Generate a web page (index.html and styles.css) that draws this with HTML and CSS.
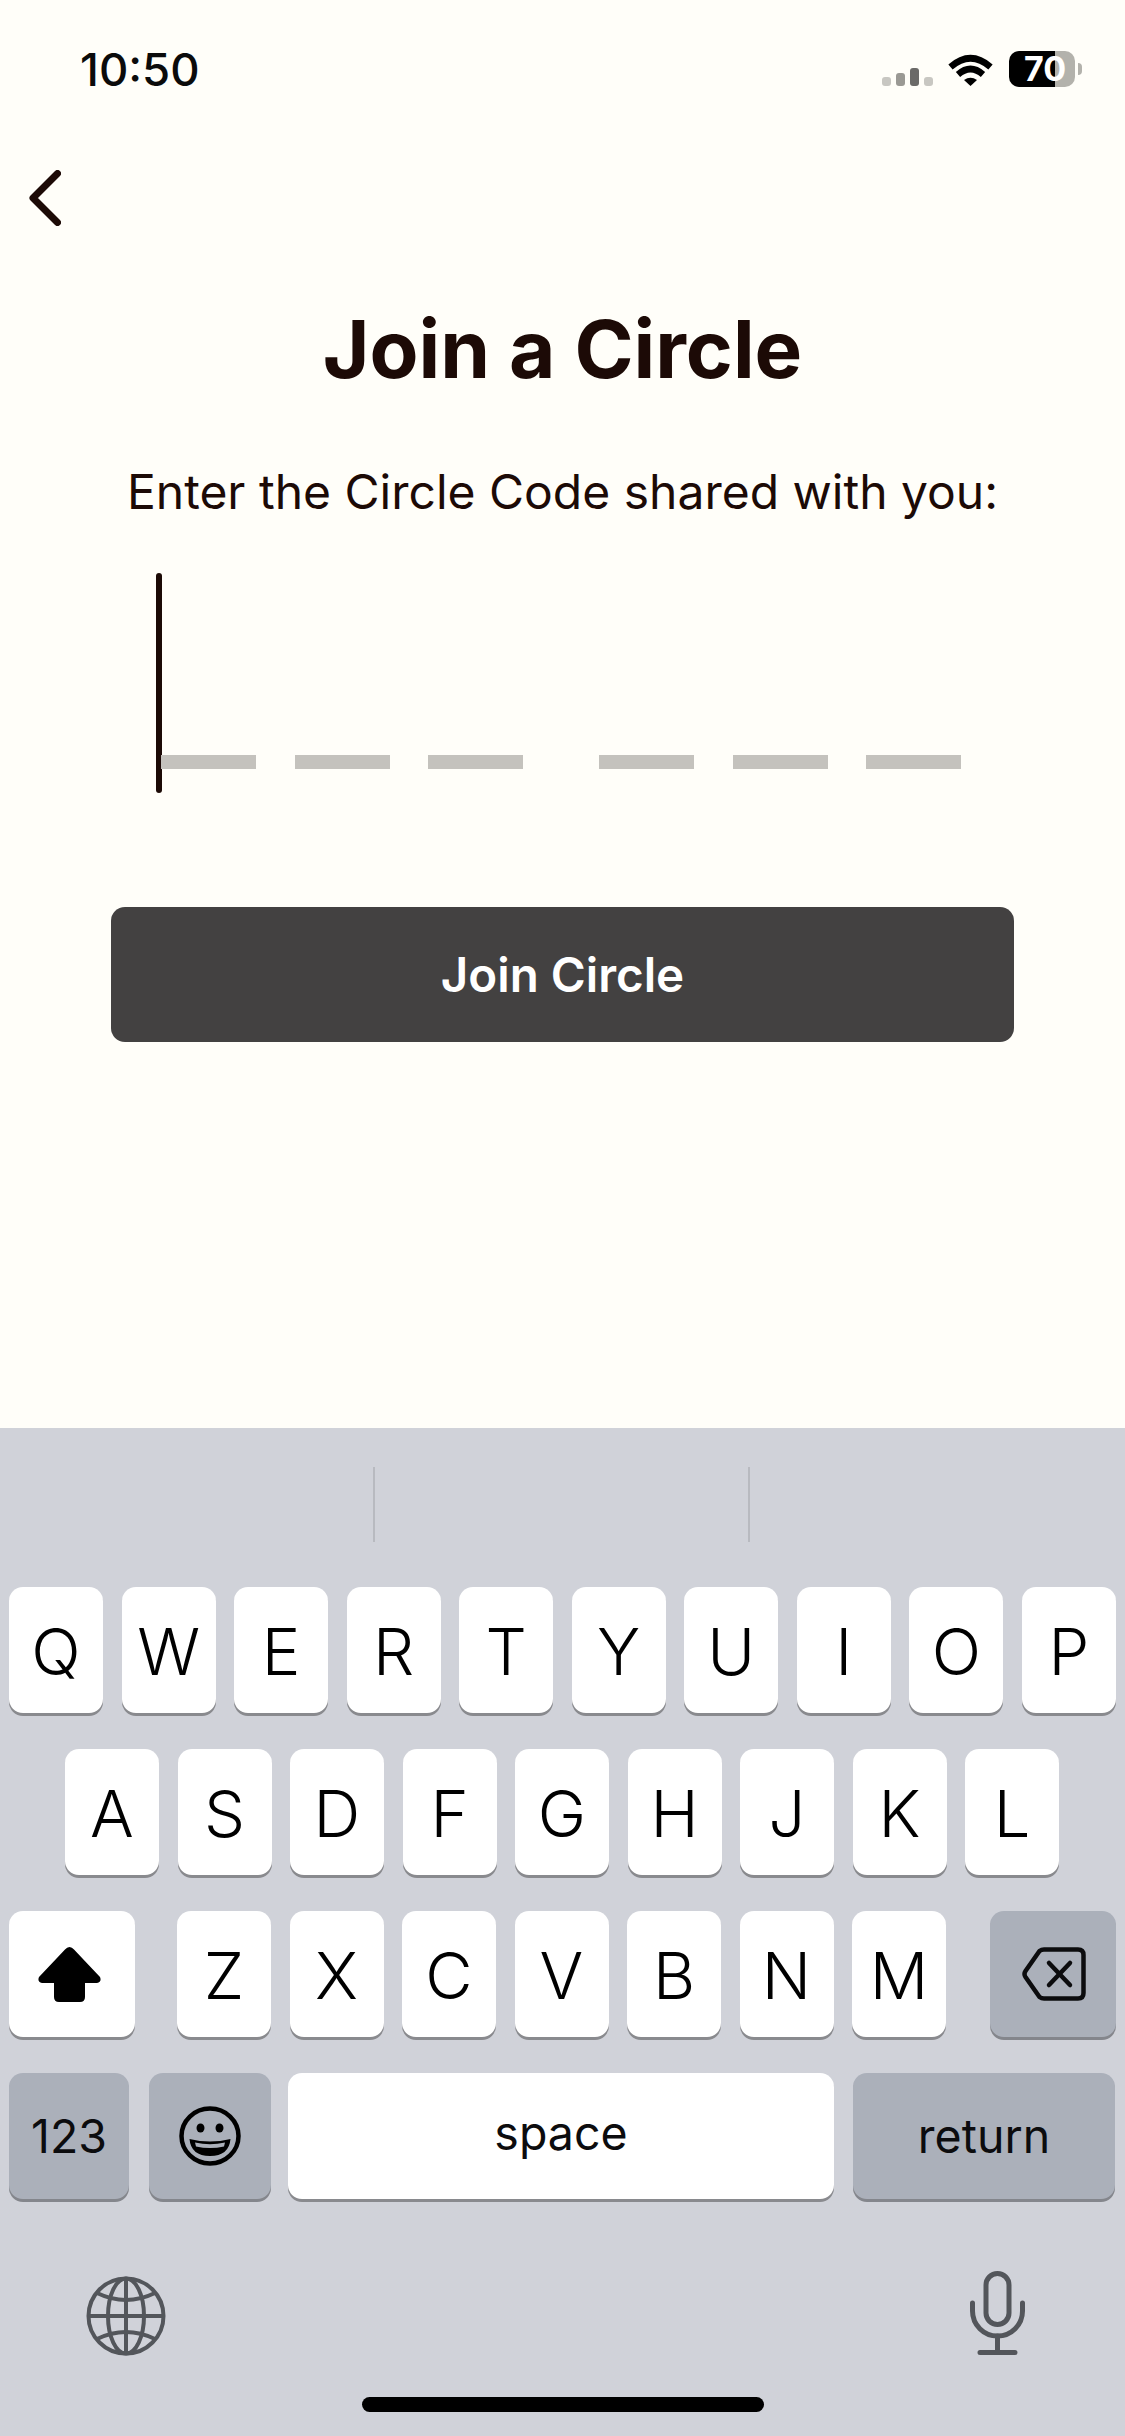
FILE: index.html
```html
<!DOCTYPE html>
<html lang="en">
<head>
    <meta charset="UTF-8">
    <meta name="viewport" content="width=device-width, initial-scale=1.0">
    <title>Join a Circle</title>
    <link rel="stylesheet" href="styles.css">
</head>
<body>
    <div class="screen">
        <div class="status-bar">
            <span class="time">10:50</span>
            <div class="status-icons">
                <div class="signal">
                    <span class="bar bar-1"></span>
                    <span class="bar bar-2"></span>
                    <span class="bar bar-3"></span>
                    <span class="bar bar-4"></span>
                </div>
                <svg class="wifi" viewBox="0 0 45 33">
                    <path d="M2.5 14 Q22.5 -3.5 42.5 14" fill="none" stroke="#000" stroke-width="6.5"/>
                    <path d="M10 21.5 Q22.5 10.5 35 21.5" fill="none" stroke="#000" stroke-width="6.5"/>
                    <path d="M16 27 Q22.5 22.5 29 27 L22.5 33 Z" fill="#000"/>
                </svg>
                <div class="battery">
                    <div class="battery-body">
                        <span class="battery-level">70</span>
                    </div>
                    <span class="battery-tip"></span>
                </div>
            </div>
        </div>

        <div class="content">
            <svg class="back" viewBox="0 0 32 56">
                <path d="M28.5 3.500 L4 28 L28.5 52.500" fill="none" stroke="#1c0a06" stroke-width="7" stroke-linecap="round" stroke-linejoin="round"/>
            </svg>

            <h1>Join a Circle</h1>
            <p class="subtitle">Enter the Circle Code shared with you:</p>

            <div class="code-row">
                <span class="cursor"></span>
                <div class="dash-group">
                    <span class="dash"></span>
                    <span class="dash"></span>
                    <span class="dash"></span>
                </div>
                <div class="dash-group">
                    <span class="dash"></span>
                    <span class="dash"></span>
                    <span class="dash"></span>
                </div>
            </div>

            <button class="join-button">Join Circle</button>
        </div>

        <div class="keyboard">
            <div class="suggestions">
                <span class="suggestion"></span>
                <span class="suggestion-divider"></span>
                <span class="suggestion"></span>
                <span class="suggestion-divider"></span>
            </div>

            <div class="key-row">
                <span class="key">Q</span>
                <span class="key">W</span>
                <span class="key">E</span>
                <span class="key">R</span>
                <span class="key">T</span>
                <span class="key">Y</span>
                <span class="key">U</span>
                <span class="key">I</span>
                <span class="key">O</span>
                <span class="key">P</span>
            </div>

            <div class="key-row key-row-center">
                <span class="key">A</span>
                <span class="key">S</span>
                <span class="key">D</span>
                <span class="key">F</span>
                <span class="key">G</span>
                <span class="key">H</span>
                <span class="key">J</span>
                <span class="key">K</span>
                <span class="key">L</span>
            </div>

            <div class="key-row">
                <span class="key key-side key-light">
                    <svg class="shift-icon" viewBox="0 0 63 55">
                        <path d="M31.5 0 Q29 0 27 2.500 L1 30 Q-1 35 4 36 L16 36 L16 50 Q16 55 21 55 L42 55 Q47 55 47 50 L47 36 L59 36 Q64 35 62 30 L36 2.500 Q34 0 31.500 0 Z" fill="#000"/>
                    </svg>
                </span>
                <div class="letter-group">
                    <span class="key">Z</span>
                    <span class="key">X</span>
                    <span class="key">C</span>
                    <span class="key">V</span>
                    <span class="key">B</span>
                    <span class="key">N</span>
                    <span class="key">M</span>
                </div>
                <span class="key key-side key-dark">
                    <svg class="delete-icon" viewBox="0 0 64 54">
                        <path d="M22 2.500 L56 2.500 Q61.500 2.500 61.500 8 L61.500 46 Q61.500 51.500 56 51.500 L22 51.500 Q19.500 51.500 17.500 50 L3.500 30 Q1.500 27 3.500 24 L17.500 4 Q19.500 2.500 22 2.500 Z" fill="none" stroke="#0c0c0e" stroke-width="4.500" stroke-linejoin="round"/>
                        <path d="M27 16 L48 38 M48 16 L27 38" fill="none" stroke="#0c0c0e" stroke-width="4.500" stroke-linecap="round"/>
                    </svg>
                </span>
            </div>

            <div class="key-row key-row-bottom">
                <span class="key key-dark key-123">123</span>
                <span class="key key-dark key-emoji">
                    <svg class="emoji-icon" viewBox="0 0 62 60">
                        <ellipse cx="31" cy="30" rx="28.500" ry="27.500" fill="none" stroke="#000" stroke-width="4.500"/>
                        <ellipse cx="21.500" cy="22" rx="4" ry="4.500" fill="#000"/>
                        <ellipse cx="40.500" cy="22" rx="4" ry="4.500" fill="#000"/>
                        <path d="M10.500 33 Q31 38 51.500 33 Q50 50 31 50 Q12 50 10.500 33 Z" fill="#000"/>
                        <path d="M16 36.500 Q31 40 46 36.500 L45 40.500 Q31 43.500 17 40.500 Z" fill="#abb0ba"/>
                    </svg>
                </span>
                <span class="key key-space">space</span>
                <span class="key key-dark key-return">return</span>
            </div>

            <div class="keyboard-bottom">
                <svg class="globe-icon" viewBox="0 0 80 80">
                    <g fill="none" stroke="#53565b" stroke-width="4">
                        <circle cx="40" cy="40" r="37.500"/>
                        <ellipse cx="40" cy="40" rx="18" ry="37.500"/>
                        <path d="M40 2.500 V77.500 M2.500 40 H77.500"/>
                        <path d="M11 17 Q40 31 69 17"/>
                        <path d="M11 63 Q40 49 69 63"/>
                    </g>
                </svg>
                <svg class="mic-icon" viewBox="0 0 55 84">
                    <g fill="none" stroke="#53565b" stroke-width="5" stroke-linecap="round">
                        <rect x="16" y="2.500" width="23" height="51" rx="11.500"/>
                        <path d="M2.500 32 V40 A25 25 0 0 0 52.500 40 V32"/>
                        <path d="M27.500 65 V81 M10 81.500 H45"/>
                    </g>
                </svg>
            </div>

            <div class="home-bar"></div>
        </div>
    </div>
</body>
</html>
```

FILE: styles.css
```css
* {
    margin: 0;
    padding: 0;
    box-sizing: border-box;
}

body {
    background: #FFFEF9;
    font-family: Inter, "Liberation Sans", sans-serif;
}

.screen {
    width: 1125px;
    height: 2436px;
    display: flex;
    flex-direction: column;
    overflow: hidden;
}

/* status bar */
.status-bar {
    height: 138px;
    flex-shrink: 0;
    display: flex;
    justify-content: space-between;
    align-items: center;
    padding: 0 43px 0 80px;
}

.time {
    font-size: 45.5px;
    font-weight: 550;
    color: #0b0b0b;
}

.status-icons {
    display: flex;
    align-items: center;
}

.signal {
    display: flex;
    align-items: flex-end;
    gap: 5px;
    height: 18px;
    margin: 16px 15px 0 0;
}

.bar {
    width: 9px;
    border-radius: 3px;
}

.bar-1 {
    height: 9px;
    background: #C8C7C2;
}

.bar-2 {
    height: 13px;
    background: #9A9994;
}

.bar-3 {
    height: 18px;
    background: #6B6A68;
}

.bar-4 {
    height: 9px;
    background: #C8C7C2;
}

.wifi {
    width: 45px;
    height: 33px;
    margin-right: 16px;
}

.battery {
    display: flex;
    align-items: center;
    gap: 3px;
}

.battery-body {
    width: 66px;
    height: 36px;
    border-radius: 10px;
    background: linear-gradient(to right, #000 46px, #B3B2AC 46px);
    display: flex;
    justify-content: center;
    align-items: center;
}

.battery-level {
    color: #FFF;
    font-size: 34px;
    font-weight: 700;
    padding-left: 6px;
    line-height: 36px;
}

.battery-tip {
    width: 4px;
    height: 12px;
    border-radius: 0 4px 4px 0;
    background: #B3B2AC;
}

/* main content */
.content {
    flex: 1;
}

.back {
    display: block;
    width: 32px;
    height: 56px;
    margin: 32px 0 0 29px;
}

h1 {
    font-size: 80px;
    line-height: 96px;
    font-weight: 700;
    color: #1C0A06;
    text-align: center;
    margin-top: 75px;
}

.subtitle {
    font-size: 48px;
    line-height: 60px;
    color: #1C0A06;
    text-align: center;
    margin-top: 65px;
}

.code-row {
    height: 220px;
    margin-top: 51px;
    padding-left: 156px;
    display: flex;
    align-items: flex-end;
}

.cursor {
    width: 6px;
    height: 220px;
    border-radius: 3px;
    background: #1C0A06;
    margin-right: -1px;
}

.dash-group {
    display: flex;
    gap: 38.5px;
    margin: 0 76px 24px 0;
}

.dash {
    width: 95px;
    height: 14px;
    background: #C4C2BD;
}

.join-button {
    display: block;
    width: 903px;
    height: 135px;
    margin: 114px auto 0;
    border: none;
    border-radius: 14px;
    background: #434141;
    color: #FFF;
    font-family: inherit;
    font-size: 47.5px;
    font-weight: 600;
}

/* keyboard */
.keyboard {
    height: 1008px;
    flex-shrink: 0;
    background: #D0D2D9;
    position: relative;
}

.suggestions {
    height: 159px;
    padding-top: 39px;
    display: flex;
    align-items: flex-start;
}

.suggestion {
    width: 373px;
}

.suggestion-divider {
    width: 2px;
    height: 75px;
    background: #B8BAC0;
}

.key-row {
    display: flex;
    justify-content: space-between;
    padding: 0 9px;
    margin-bottom: 36px;
}

.key-row-center {
    justify-content: center;
    gap: 18.5px;
    padding-right: 10px;
}

.letter-group {
    display: flex;
    gap: 18.5px;
    margin-right: 2px;
}

.key {
    width: 94px;
    height: 126px;
    border-radius: 14px;
    background: #FFF;
    box-shadow: 0 3px 0 #898A8E;
    display: flex;
    justify-content: center;
    align-items: center;
    padding-top: 2px;
    color: #000;
    font-size: 65px;
    font-weight: 350;
}

.key-side {
    width: 126px;
    padding-top: 0;
}

.key-light {
    background: #FFF;
}

.key-dark {
    background: #ABB0BA;
    box-shadow: 0 3px 0 #84868C;
}

.key-row-bottom {
    justify-content: flex-start;
}

.key-123,
.key-emoji,
.key-space,
.key-return {
    font-size: 46.5px;
    font-weight: 400;
    color: #0C0C0E;
    padding-top: 0;
}

.key-123 {
    width: 120px;
    margin-right: 20px;
}

.key-emoji {
    width: 122px;
    margin-right: 17px;
}

.key-space {
    width: 546px;
    margin-right: 19px;
    padding-bottom: 6px;
}

.key-return {
    width: 262px;
}

.shift-icon {
    width: 63px;
    height: 55px;
    margin: 0 6px 0 0;
}

.delete-icon {
    width: 64px;
    height: 54px;
    margin-left: 2px;
}

.emoji-icon {
    width: 62px;
    height: 60px;
}

.keyboard-bottom {
    display: flex;
    justify-content: space-between;
    align-items: flex-start;
    padding: 36px 100px 0 86px;
}

.globe-icon {
    width: 80px;
    height: 80px;
    margin-top: 5px;
}

.mic-icon {
    width: 55px;
    height: 84px;
}

/* sits over the bottom of the keyboard */
.home-bar {
    position: absolute;
    left: 362px;
    top: 969px;
    width: 402px;
    height: 15px;
    border-radius: 8px;
    background: #000;
}
```
